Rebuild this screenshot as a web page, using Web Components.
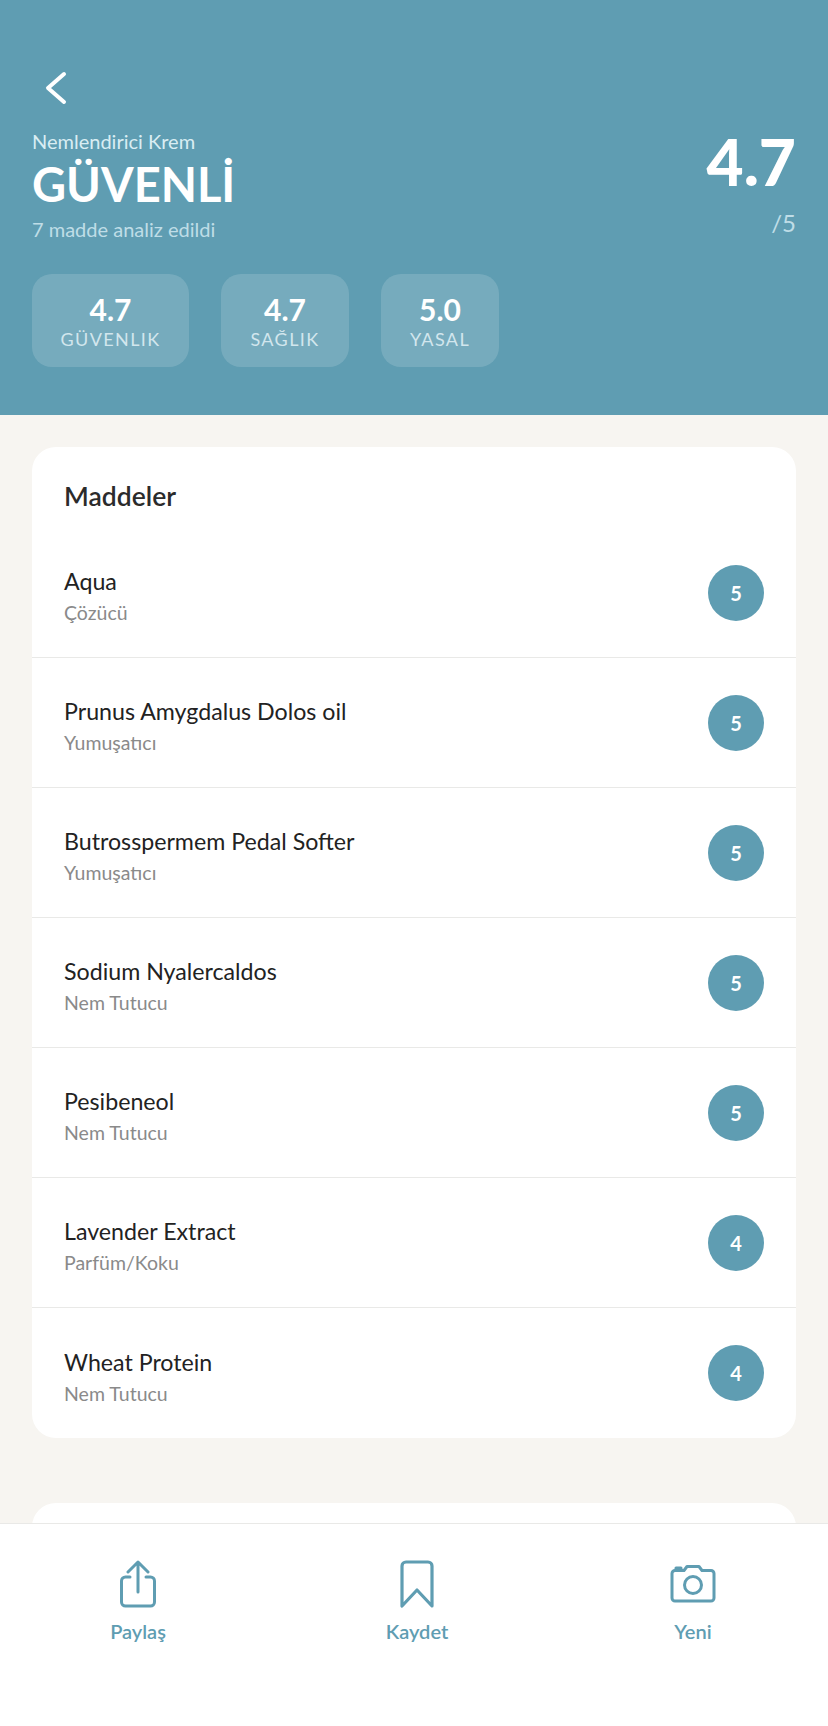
<!DOCTYPE html>
<html lang="tr">
<head>
<meta charset="utf-8">
<title>Analiz</title>
<style>
    html, body { margin: 0; padding: 0; }
    body {
        width: 828px;
        height: 1726px;
        overflow: hidden;
        position: relative;
        background: #f7f5f1;
        font-family: "Lato", "Noto Sans", sans-serif;
    }
    .content { display: block; padding: 32px 32px 0; }
    .content > * { margin-bottom: 65px; }
</style>
</head>
<body>
<result-header kind="Nemlendirici Krem" verdict="GÜVENLİ" note="7 madde analiz edildi" score="4.7" max="/5">
    <score-pill style="width:157px" value="4.7" label="GÜVENLIK"></score-pill>
    <score-pill style="width:128px" value="4.7" label="SAĞLIK"></score-pill>
    <score-pill style="width:118px" value="5.0" label="YASAL"></score-pill>
</result-header>

<div class="content">
    <ingredient-card heading="Maddeler">
        <ingredient-row name="Aqua" role="Çözücü" score="5"></ingredient-row>
        <ingredient-row name="Prunus Amygdalus Dolos oil" role="Yumuşatıcı" score="5"></ingredient-row>
        <ingredient-row name="Butrosspermem Pedal Softer" role="Yumuşatıcı" score="5"></ingredient-row>
        <ingredient-row name="Sodium Nyalercaldos" role="Nem Tutucu" score="5"></ingredient-row>
        <ingredient-row name="Pesibeneol" role="Nem Tutucu" score="5"></ingredient-row>
        <ingredient-row name="Lavender Extract" role="Parfüm/Koku" score="4"></ingredient-row>
        <ingredient-row name="Wheat Protein" role="Nem Tutucu" score="4"></ingredient-row>
    </ingredient-card>
    <ingredient-card></ingredient-card>
</div>

<action-bar>
    <bar-action label="Paylaş">
        <svg width="38" height="48" viewBox="0 0 38 48" fill="none" stroke="#5f9db2" stroke-width="3" stroke-linecap="round" stroke-linejoin="round">
            <path d="M11 17H6.500a4 4 0 0 0-4 4v21a4 4 0 0 0 4 4h25a4 4 0 0 0 4-4V21a4 4 0 0 0-4-4H27"/>
            <path d="M19 32V2M9 12 19 2l10 10"/>
        </svg>
    </bar-action>
    <bar-action label="Kaydet">
        <svg width="34" height="48" viewBox="0 0 34 48" fill="none" stroke="#5f9db2" stroke-width="3.200" stroke-linejoin="round">
            <path d="M2 46V6a4 4 0 0 1 4-4h22a4 4 0 0 1 4 4v40L17 30Z"/>
        </svg>
    </bar-action>
    <bar-action label="Yeni">
        <svg width="46" height="48" viewBox="0 0 46 48" fill="none" stroke="#5f9db2" stroke-width="3" stroke-linejoin="round">
            <path d="M2 13.500a3 3 0 0 1 3-3h9l3-4h12l3 4h9a3 3 0 0 1 3 3V38a3 3 0 0 1-3 3H5a3 3 0 0 1-3-3Z"/>
            <circle cx="23" cy="25" r="8.500"/>
            <path d="M6 10.500V8h5v2.500"/>
        </svg>
    </bar-action>
</action-bar>

<script>
class ResultHeader extends HTMLElement {
    constructor() {
        super();
        this.attachShadow({ mode: 'open' });
        this.shadowRoot.innerHTML = `
            <style>
                :host {
                    display: block;
                    height: 415px;
                    box-sizing: border-box;
                    padding: 70px 32px 0;
                    background: #5f9db2;
                    color: #fff;
                }
                .back { display: block; margin: 0 0 0 13px; }
                .top { display: flex; justify-content: space-between; margin-top: 22px; }
                .kind { font-size: 20px; line-height: 26px; color: #d9edf3; }
                .verdict { font-size: 47px; line-height: 50px; font-weight: 700; margin-top: 5px; }
                .note { font-size: 20px; line-height: 26px; margin-top: 7px; color: #bfdde7; }
                .right { text-align: right; }
                .score { font-size: 64px; line-height: 68px; font-weight: 900; }
                .max { font-size: 24px; line-height: 30px; margin-top: 12px; color: #bfdde7; }
                .pills { display: flex; gap: 32px; margin-top: 32px; }
            </style>
            <svg class="back" width="24" height="36" viewBox="0 0 24 36" fill="none" stroke="#fff" stroke-width="4" stroke-linecap="round" stroke-linejoin="round">
                <path d="M19 4 3 18l16 14"/>
            </svg>
            <div class="top">
                <div>
                    <div class="kind"></div>
                    <div class="verdict"></div>
                    <div class="note"></div>
                </div>
                <div class="right">
                    <div class="score"></div>
                    <div class="max"></div>
                </div>
            </div>
            <div class="pills"><slot></slot></div>
        `;
    }

    connectedCallback() {
        for (const name of ['kind', 'verdict', 'note', 'score', 'max']) {
            this.shadowRoot.querySelector('.' + name).textContent = this.getAttribute(name);
        }
    }
}

class ScorePill extends HTMLElement {
    constructor() {
        super();
        this.attachShadow({ mode: 'open' });
        this.shadowRoot.innerHTML = `
            <style>
                :host {
                    display: block;
                    height: 93px;
                    box-sizing: border-box;
                    padding-top: 19px;
                    border-radius: 20px;
                    background: rgba(255, 255, 255, 0.15);
                    text-align: center;
                }
                .value { font-size: 30px; line-height: 32px; font-weight: 700; color: #fff; }
                .label { font-size: 18px; line-height: 24px; margin-top: 2px; letter-spacing: 1.400px; color: #d2e6ed; }
            </style>
            <div class="value"></div>
            <div class="label"></div>
        `;
    }

    connectedCallback() {
        this.shadowRoot.querySelector('.value').textContent = this.getAttribute('value');
        this.shadowRoot.querySelector('.label').textContent = this.getAttribute('label');
    }
}

class IngredientCard extends HTMLElement {
    constructor() {
        super();
        this.attachShadow({ mode: 'open' });
        this.shadowRoot.innerHTML = `
            <style>
                :host {
                    display: block;
                    background: #fff;
                    border-radius: 24px;
                    min-height: 100px;
                    overflow: hidden;
                }
                h2 {
                    margin: 0;
                    padding: 0 32px;
                    height: 81px;
                    line-height: 98px;
                    font-size: 26.500px;
                    font-weight: 600;
                    color: #2b2b2b;
                }
                h2:empty { display: none; }
            </style>
            <h2></h2>
            <slot></slot>
        `;
    }

    connectedCallback() {
        this.shadowRoot.querySelector('h2').textContent = this.getAttribute('heading') || '';
    }
}

class IngredientRow extends HTMLElement {
    constructor() {
        super();
        this.attachShadow({ mode: 'open' });
        this.shadowRoot.innerHTML = `
            <style>
                :host {
                    display: flex;
                    align-items: center;
                    justify-content: space-between;
                    height: 130px;
                    box-sizing: border-box;
                    padding: 0 32px;
                    border-bottom: 1px solid #e9e9e7;
                }
                :host(:last-child) { border-bottom: 0; }
                .text { padding-top: 7px; }
                .name { font-size: 23.200px; line-height: 32px; color: #222; }
                .role { font-size: 19.500px; line-height: 28px; margin-top: 2px; color: #8a8a8a; }
                .badge {
                    width: 56px;
                    height: 56px;
                    border-radius: 50%;
                    background: #5f9db2;
                    color: #fff;
                    font-size: 20px;
                    font-weight: 700;
                    display: flex;
                    align-items: center;
                    justify-content: center;
                }
            </style>
            <div class="text">
                <div class="name"></div>
                <div class="role"></div>
            </div>
            <div class="badge"></div>
        `;
    }

    connectedCallback() {
        this.shadowRoot.querySelector('.name').textContent = this.getAttribute('name');
        this.shadowRoot.querySelector('.role').textContent = this.getAttribute('role');
        this.shadowRoot.querySelector('.badge').textContent = this.getAttribute('score');
    }
}

class ActionBar extends HTMLElement {
    constructor() {
        super();
        this.attachShadow({ mode: 'open' });
        this.shadowRoot.innerHTML = `
            <style>
                :host {
                    display: grid;
                    grid-template-columns: 276px 282px 270px;
                    justify-items: center;
                    align-items: start;
                    position: absolute;
                    left: 0;
                    right: 0;
                    bottom: 0;
                    height: 203px;
                    box-sizing: border-box;
                    padding: 36px 0 0;
                    background: #fff;
                    border-top: 1px solid #e9e9e7;
                }
            </style>
            <slot></slot>
        `;
    }
}

class BarAction extends HTMLElement {
    constructor() {
        super();
        this.attachShadow({ mode: 'open' });
        this.shadowRoot.innerHTML = `
            <style>
                :host {
                    display: flex;
                    flex-direction: column;
                    align-items: center;
                    width: 100px;
                }
                .icon { height: 48px; display: flex; align-items: center; }
                .label { font-size: 20px; line-height: 26px; margin-top: 10px; font-weight: 600; color: #5f9db2; }
            </style>
            <div class="icon"><slot></slot></div>
            <div class="label"></div>
        `;
    }

    connectedCallback() {
        this.shadowRoot.querySelector('.label').textContent = this.getAttribute('label');
    }
}

customElements.define('result-header', ResultHeader);
customElements.define('score-pill', ScorePill);
customElements.define('ingredient-card', IngredientCard);
customElements.define('ingredient-row', IngredientRow);
customElements.define('action-bar', ActionBar);
customElements.define('bar-action', BarAction);
</script>
</body>
</html>
